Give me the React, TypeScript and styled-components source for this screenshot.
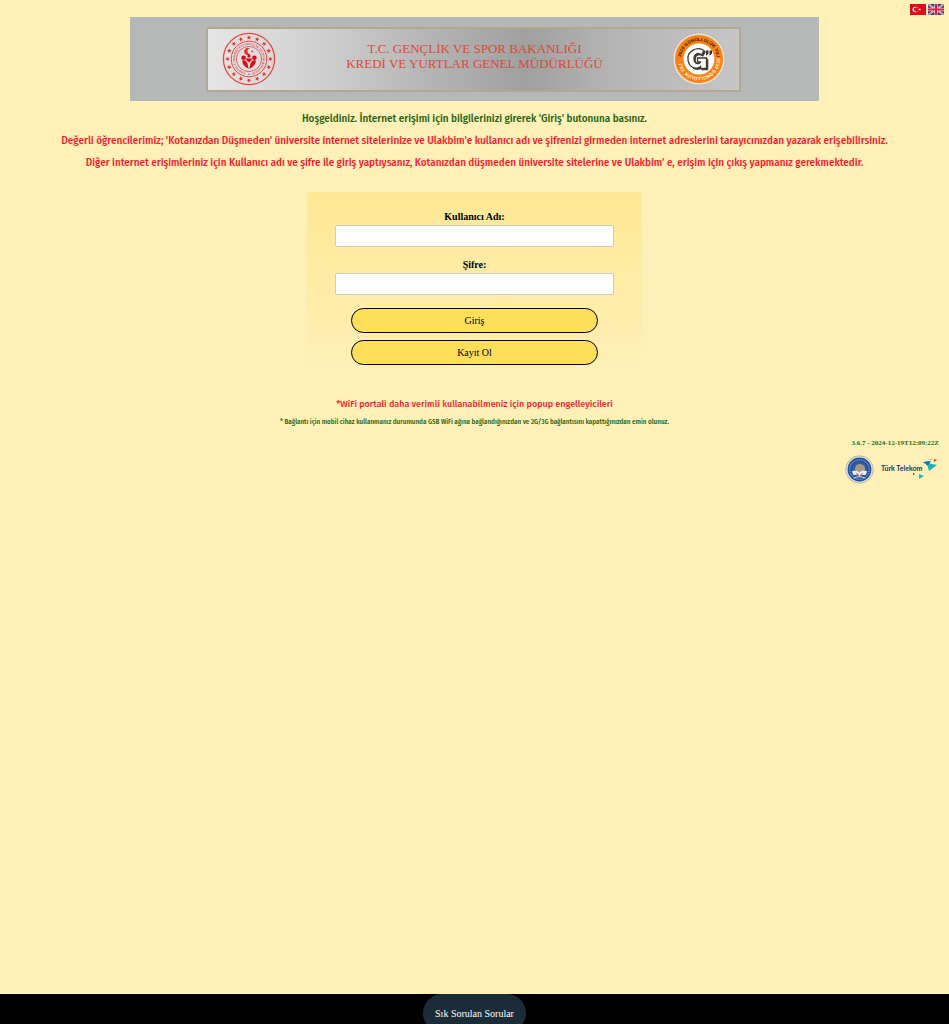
import React from "react";
import styled, { createGlobalStyle } from "styled-components";

const GlobalStyle = createGlobalStyle`
  *, *::before, *::after { box-sizing: border-box; }
  body {
    margin: 0;
    background: #fff0b8;
    color: #000;
    font-family: "Liberation Serif", "Times New Roman", serif;
    font-size: 10px;
  }
`;

const Page = styled.div`
  display: flex;
  flex-direction: column;
  align-items: center;
  min-height: 100vh;
`;

const LanguageBar = styled.nav`
  display: flex;
  align-self: stretch;
  justify-content: flex-end;
  gap: 2px;
  height: 17px;
  padding: 4px 5px 0;
`;

const FlagLink = styled.a`
  display: block;
  width: 16px;
  height: 11px;
  svg { display: block; width: 100%; height: 100%; }
`;

const Banner = styled.header`
  width: 72.5%;
  padding: 10px 78px 9px 76px;
  background: #b6b8b7;
`;

const BannerPlate = styled.div`
  display: flex;
  align-items: flex-start;
  justify-content: space-between;
  height: 65px;
  padding: 3px 12px 0 14px;
  border: 2px solid #b0a890;
  border-radius: 2px;
  background: linear-gradient(90deg, #e6e6e6 0%, #cccccc 24%, #b4b4b4 42%, #a0a0a0 60%, #b4b4b4 76%, #c6c6c6 100%);
`;

const BannerTitle = styled.h1`
  margin: 0;
  padding-top: 9px;
  color: #dc4a32;
  font-size: 13px;
  font-weight: 400;
  line-height: 15px;
  text-align: center;
  span { display: block; }
`;

const Emblem = styled.svg<{ $size: number }>`
  display: block;
  flex: none;
  width: ${(p) => p.$size}px;
  height: ${(p) => p.$size}px;
`;

const Messages = styled.section`
  margin-top: 7px;
`;

type Tone = "info" | "alert";

const Message = styled.p<{ $tone: Tone; $size: number; $line: number }>`
  margin: 0;
  color: ${(p) => (p.$tone === "alert" ? "#ff1a30" : "#1f6412")};
  font-family: "Fira Sans Condensed", "Noto Sans Condensed", "Roboto Condensed", Roboto, sans-serif;
  font-size: ${(p) => p.$size}px;
  font-weight: 500;
  line-height: ${(p) => p.$line}px;
  text-align: center;
`;

const PopupNotice = styled(Message)`
  font-family: "Fira Sans", "Noto Sans", Roboto, sans-serif;
`;

const LoginForm = styled.form`
  display: flex;
  flex-direction: column;
  align-items: center;
  width: 35.2%;
  margin-top: 18px;
  padding: 18px 28px 13px;
  border-radius: 3px;
  background: linear-gradient(#ffe894, #fff0b8);
`;

const Field = styled.div`
  width: 100%;
  margin-bottom: 11px;
`;

const Label = styled.label`
  display: block;
  margin-bottom: 1px;
  font-weight: 700;
  line-height: 14px;
  text-align: center;
`;

const TextInput = styled.input`
  display: block;
  width: 100%;
  height: 22px;
  padding: 2px 6px;
  border: 1px solid #ccc;
  border-radius: 2px;
  background: #fff;
  font: inherit;
`;

const Actions = styled.div`
  display: flex;
  flex-direction: column;
  gap: 7px;
  width: 100%;
  padding: 2px 16px 0;
`;

const PillButton = styled.button`
  height: 25px;
  padding: 0;
  border: 1px solid #000;
  border-radius: 13px;
  background: #ffde5a;
  color: #000;
  font: inherit;
  cursor: pointer;
`;

const Notes = styled.section`
  margin-top: 17px;
`;

const Credits = styled.section`
  display: flex;
  flex-direction: column;
  align-self: stretch;
  align-items: flex-end;
  gap: 6px;
  margin-top: 6px;
  padding-right: 10px;
`;

const Version = styled.p`
  margin: 0;
  color: #256b1a;
  font-size: 7px;
  font-weight: 700;
  line-height: 12px;
`;

const Partners = styled.div`
  display: flex;
  align-items: center;
  gap: 7px;
`;

const TelekomLogo = styled.svg`
  display: block;
  width: 58px;
  height: 24px;
`;

const Footer = styled.footer`
  display: flex;
  align-self: stretch;
  justify-content: center;
  height: 30px;
  margin-top: auto;
  overflow: hidden;
  background: #000;
`;

const FaqButton = styled.button`
  flex: none;
  height: 38px;
  padding: 0 12px;
  border: 0;
  border-radius: 19px;
  background: #1c2b38;
  color: #fff;
  font: inherit;
  cursor: pointer;
`;

const starPath = "M0-2.4L.7-.8 2.3-.7 1.1.2 1.5 2 0 1-1.5 2-1.1.2-2.3-.7-.7-.8Z";

const MinistryEmblem = () => (
  <Emblem $size={54} viewBox="-27 -27 54 54" role="img" aria-label="Gençlik ve Spor Bakanlığı">
    <defs>
      <path id="ministryRing" d="M-3 13.7A14 14 0 1 1 3 13.7" />
    </defs>
    <g fill="none" stroke="#e8473d">
      <circle r="25.6" strokeWidth="1.3" />
      <circle r="17.8" strokeWidth="1" />
      <circle r="12.6" strokeWidth=".8" />
    </g>
    <g fill="#e5332b">
      {Array.from({ length: 16 }, (_, i) => (
        <path key={i} d={starPath} transform={`rotate(${i * 22.5}) translate(0 -21.4)`} />
      ))}
    </g>
    <text fill="#e5332b" fontSize="3" fontWeight="700" textAnchor="middle">
      <textPath href="#ministryRing" startOffset="50%">TÜRKİYE CUMHURİYETİ GENÇLİK VE SPOR BAKANLIĞI</textPath>
    </text>
    <circle cy="15.2" r=".8" fill="#e5332b" />
    <path d="M1-10.4A3.6 3.6 0 1 0 1.4-5 2.7 2.7 0 1 1 1-10.4Z" fill="#e5332b" />
    <circle cx="3.2" cy="-7.6" r=".9" fill="#e5332b" />
    <g fill="#e30613">
      <circle cx="-5.4" cy="-1.2" r="2.3" />
      <circle cx="5.4" cy="-1.2" r="2.3" />
      <circle cx="0" cy="-3" r="1.6" />
      <path d="M-6.8 1.6C-4.6.8-2.6 2.2-1.6 4.2L-.4 9.8C-4.4 8.2-6.8 5-6.8 1.6Z" />
      <path d="M6.8 1.6C4.6.8 2.6 2.2 1.6 4.2L.4 9.8C4.4 8.2 6.8 5 6.8 1.6Z" />
      <path d="M-2.4-1C-.8-.2.8-.2 2.4-1L2.8 1 0 3.4-2.8 1Z" />
    </g>
  </Emblem>
);

const VolunteerEmblem = () => (
  <Emblem $size={54} viewBox="-27 -27 54 54" role="img" aria-label="2019 Gönüllülük Yılı">
    <defs>
      <path id="volunteerRing" d="M-18 0A18 18 0 1 1 18 0A18 18 0 1 1-18 0" />
    </defs>
    <circle r="26" fill="#e4e1dc" stroke="#aaa" strokeWidth=".8" strokeDasharray="1.5 1" />
    <circle r="24" fill="#fa8214" />
    <circle r="15.4" fill="#fff" />
    <text fontFamily="Liberation Sans, sans-serif" fontSize="4.5" fontWeight="700" fill="#29190c">
      <textPath href="#volunteerRing" startOffset="2">
        2019 GÖNÜLLÜLÜK YILI <tspan fill="#fff">2019 GÖNÜLLÜLÜK YILI</tspan>
      </textPath>
    </text>
    <path
      d="M5-8.5C-2-13-12-8-11 1C-10 9-2 11 1.5 7.5V9.5H7.5V-1H-1.5V3H1.5C0 6-5 5-5-.5C-5-6 0-6.5 2.5-4Z"
      transform="translate(1.3 1.3)"
      fill="#3c3832"
      stroke="#3c3832"
    />
    <path
      d="M5-8.5C-2-13-12-8-11 1C-10 9-2 11 1.5 7.5V9.5H7.5V-1H-1.5V3H1.5C0 6-5 5-5-.5C-5-6 0-6.5 2.5-4Z"
      fill="#fff"
      stroke="#3c3832"
      strokeWidth="1.3"
    />
    <path d="M7-8.5h2.5v3l-2 2-.8-.8 1-1.2H7ZM10.5-8.5H13v3l-2 2-.8-.8 1-1.2h-.7Z" fill="#302c28" />
  </Emblem>
);

const GsbSeal = () => (
  <Emblem $size={29} viewBox="-15 -15 30 30" role="img" aria-label="Kredi ve Yurtlar Kurumu">
    <circle r="14.2" fill="#e7e3d2" stroke="#a9a99f" strokeWidth=".8" />
    <circle r="12.3" fill="#204f9c" />
    <circle r="10.1" fill="none" stroke="#7895c3" strokeWidth="1.6" strokeDasharray="1 .8" />
    <circle r="8.2" fill="#2c5ba4" />
    <path d="M-5-1L-3-5 1-6 5-4 6 0 2 3-3 2Z" fill="#a99b83" />
    <path d="M-8 2C-5 0-2 1 0 3C2 1 5 0 8 2L6 6C3 5 1 6 0 7C-2 5-4 5-6 6Z" fill="#eef0f4" />
    <path d="M-4 3L-1 5 0 7-3 5ZM4 3L1 5 0 7 3 5Z" fill="#d66464" />
    <path d="M-6 9C-3 7 3 7 6 9" stroke="#d8e0ec" strokeWidth="1" fill="none" />
  </Emblem>
);

const TurkTelekom = () => (
  <TelekomLogo viewBox="0 0 58 24" role="img" aria-label="Türk Telekom">
    <path d="M43 4L50 3 48 8ZM46 5L56 7 48 13Z" fill="#16b5bd" />
    <path d="M42 4L49 3 47 8Z" fill="#147f9b" />
    <path d="M38 16L43 18 38 21Z" fill="#19bec4" />
    <path d="M53 1L56 2 53 4Z" fill="#e73834" />
    <path d="M32 15L34 16 32 17Z" fill="#173d6b" />
    <path d="M49 1h2v1h-2Z" fill="#f3a646" />
    <text x="0" y="13" fill="#17365f" fontFamily="Lato, sans-serif" fontSize="7" fontWeight="700">Türk Telekom</text>
  </TelekomLogo>
);

const TurkishFlag = () => (
  <svg viewBox="0 0 16 11" aria-hidden="true">
    <rect width="16" height="11" fill="#e30a17" />
    <circle cx="5.4" cy="5.5" r="2.8" fill="#fff" />
    <circle cx="6.2" cy="5.5" r="2.2" fill="#e30a17" />
    <path d="M8 5.5L9 5.1 9.2 4.2 9.8 5 10.8 4.8 10.2 5.6 10.7 6.4 9.8 6.1 9.1 6.8 9 5.9Z" fill="#fff" />
  </svg>
);

const BritishFlag = () => (
  <svg viewBox="0 0 16 11" aria-hidden="true">
    <rect width="16" height="11" fill="#29337a" />
    <path d="M0 0L16 11M16 0L0 11" stroke="#d9d3e4" strokeWidth="2.2" />
    <path d="M0 0L16 11M16 0L0 11" stroke="#c8405c" strokeWidth=".8" />
    <path d="M8 0V11M0 5.5H16" stroke="#e6dbe6" strokeWidth="3.4" />
    <path d="M8 0V11M0 5.5H16" stroke="#d8203a" strokeWidth="2" />
  </svg>
);

export default function App() {
  return (
    <>
      <GlobalStyle />
      <Page>
        <LanguageBar aria-label="Dil">
          <FlagLink href="#tr" aria-label="Türkçe"><TurkishFlag /></FlagLink>
          <FlagLink href="#en" aria-label="English"><BritishFlag /></FlagLink>
        </LanguageBar>

        <Banner>
          <BannerPlate>
            <MinistryEmblem />
            <BannerTitle>
              <span>T.C. GENÇLİK VE SPOR BAKANLIĞI</span>
              <span>KREDİ VE YURTLAR GENEL MÜDÜRLÜĞÜ</span>
            </BannerTitle>
            <VolunteerEmblem />
          </BannerPlate>
        </Banner>

        <Messages>
          <Message $tone="info" $size={11} $line={22}>
            Hoşgeldiniz. İnternet erişimi için bilgilerinizi girerek 'Giriş' butonuna basınız.
          </Message>
          <Message $tone="alert" $size={11} $line={22}>
            Değerli öğrencilerimiz; 'Kotanızdan Düşmeden' üniversite internet sitelerinize ve Ulakbim'e kullanıcı adı ve şifrenizi girmeden internet adreslerini tarayıcınızdan yazarak erişebilirsiniz.
          </Message>
          <Message $tone="alert" $size={11} $line={22}>
            Diğer internet erişimleriniz için Kullanıcı adı ve şifre ile giriş yaptıysanız, Kotanızdan düşmeden üniversite sitelerine ve Ulakbim’ e, erişim için çıkış yapmanız gerekmektedir.
          </Message>
        </Messages>

        <LoginForm onSubmit={(e) => e.preventDefault()}>
          <Field>
            <Label htmlFor="username">Kullanıcı Adı:</Label>
            <TextInput id="username" type="text" autoComplete="username" />
          </Field>
          <Field>
            <Label htmlFor="password">Şifre:</Label>
            <TextInput id="password" type="password" autoComplete="current-password" />
          </Field>
          <Actions>
            <PillButton type="submit">Giriş</PillButton>
            <PillButton type="button">Kayıt Ol</PillButton>
          </Actions>
        </LoginForm>

        <Notes>
          <PopupNotice $tone="alert" $size={9} $line={18}>
            *WiFi portali daha verimli kullanabilmeniz için popup engelleyicileri
          </PopupNotice>
          <Message $tone="info" $size={7} $line={18}>
            * Bağlantı için mobil cihaz kullanmanız durumunda GSB WiFi ağına bağlandığınızdan ve 2G/3G bağlantısını kapattığınızdan emin olunuz.
          </Message>
        </Notes>

        <Credits>
          <Version>3.6.7 - 2024-12-19T12:09:22Z</Version>
          <Partners>
            <GsbSeal />
            <TurkTelekom />
          </Partners>
        </Credits>

        <Footer>
          <FaqButton type="button">Sık Sorulan Sorular</FaqButton>
        </Footer>
      </Page>
    </>
  );
}
